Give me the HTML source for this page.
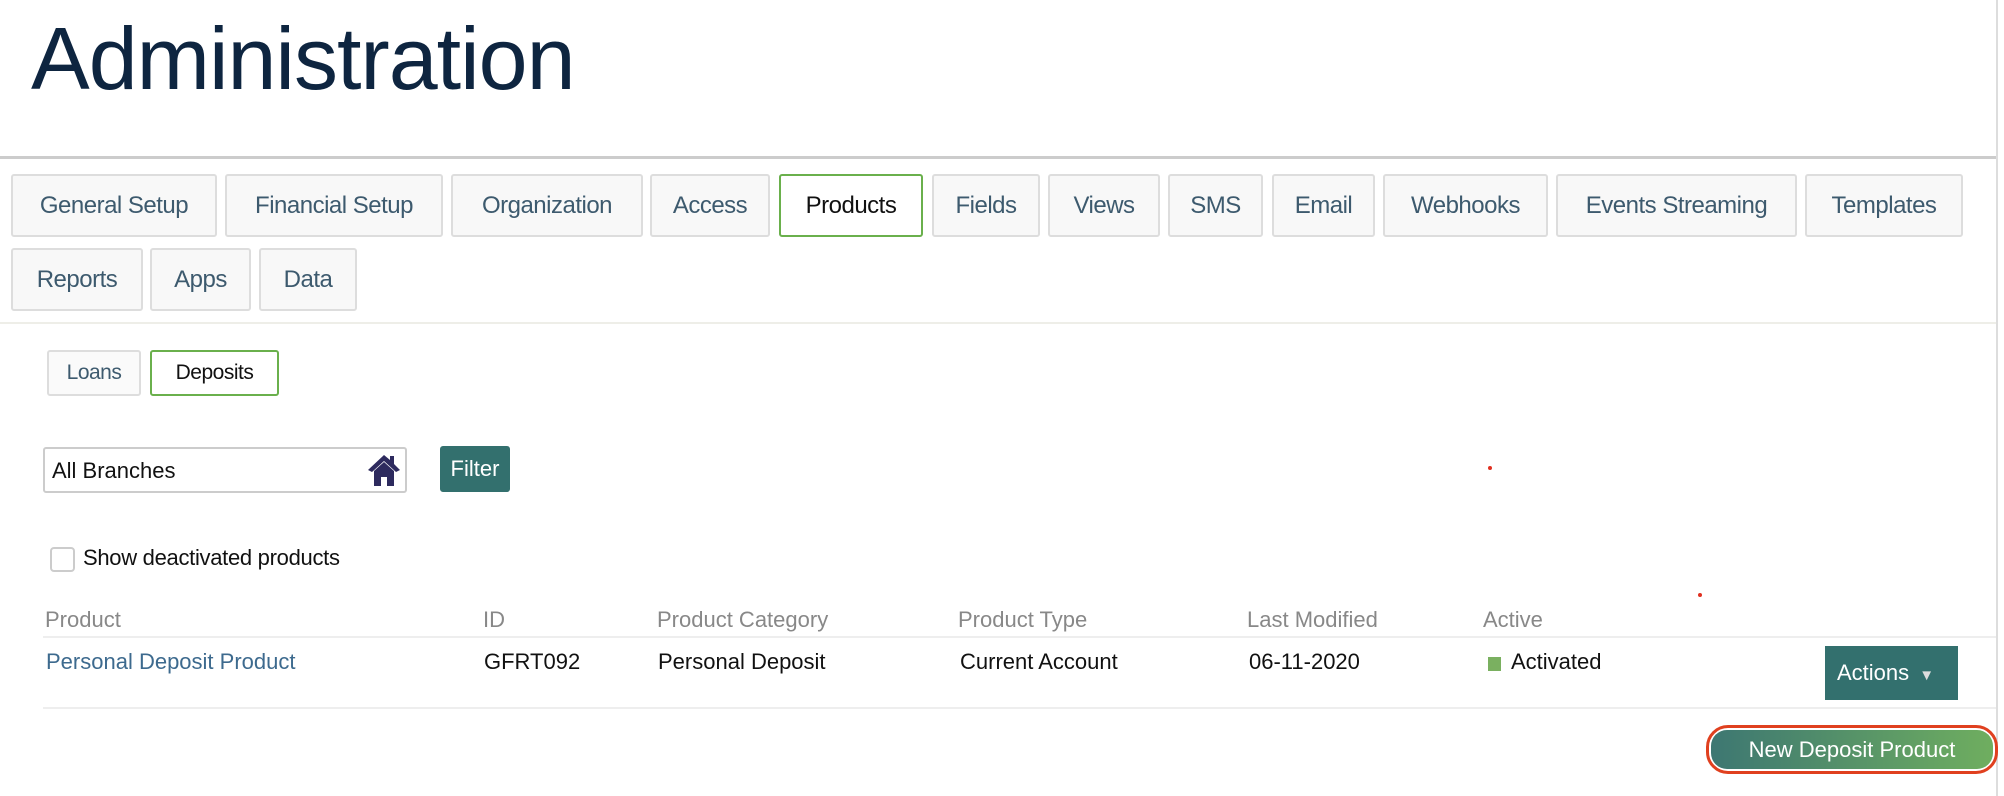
<!DOCTYPE html>
<html><head><meta charset="utf-8"><style>
*{margin:0;padding:0;box-sizing:border-box}
body{width:2004px;height:796px;background:#fff;position:relative;overflow:hidden;font-family:"Liberation Sans",sans-serif}
.a{position:absolute}
.tab{position:absolute;height:63px;background:#f8f8f8;border:2px solid #ddd;border-radius:3px;color:#3d5a6e;font-size:24px;display:flex;align-items:center;justify-content:center;white-space:nowrap;letter-spacing:-0.5px}
.tab.on{background:#fff;border-color:#6ab04c;color:#111}
.th{position:absolute;top:607px;color:#888;font-size:22px}
.td{position:absolute;top:649px;color:#111;font-size:22px}
</style></head><body>
<div class="a" style="left:0;top:0;width:1998px;height:796px;border-right:2px solid #ddd"></div>
<div class="a" style="left:31px;top:8px;font-size:88px;color:#0e2540;letter-spacing:-1px">Administration</div>
<div class="a" style="left:0;top:156px;width:1996px;height:3px;background:#ccc"></div>

<div class="tab" style="left:11px;top:174px;width:206px">General Setup</div>
<div class="tab" style="left:225px;top:174px;width:218px">Financial Setup</div>
<div class="tab" style="left:451px;top:174px;width:192px">Organization</div>
<div class="tab" style="left:650px;top:174px;width:120px">Access</div>
<div class="tab on" style="left:779px;top:174px;width:144px">Products</div>
<div class="tab" style="left:932px;top:174px;width:108px">Fields</div>
<div class="tab" style="left:1048px;top:174px;width:112px">Views</div>
<div class="tab" style="left:1168px;top:174px;width:95px">SMS</div>
<div class="tab" style="left:1272px;top:174px;width:103px">Email</div>
<div class="tab" style="left:1383px;top:174px;width:165px">Webhooks</div>
<div class="tab" style="left:1556px;top:174px;width:241px">Events Streaming</div>
<div class="tab" style="left:1805px;top:174px;width:158px">Templates</div>
<div class="tab" style="left:11px;top:248px;width:132px">Reports</div>
<div class="tab" style="left:150px;top:248px;width:101px">Apps</div>
<div class="tab" style="left:259px;top:248px;width:98px">Data</div>
<div class="a" style="left:0;top:322px;width:1996px;height:2px;background:#eeeee8"></div>

<div class="tab" style="left:47px;top:350px;width:94px;height:46px;font-size:21px;background:#fafafa;border-width:2px">Loans</div>
<div class="tab on" style="left:150px;top:350px;width:129px;height:46px;font-size:21px">Deposits</div>

<div class="a" style="left:43px;top:447px;width:364px;height:46px;border:2px solid #ccc;border-radius:3px;font-size:22px;color:#111;padding:9px 0 0 7px">All Branches</div>
<svg class="a" style="left:367px;top:453px" width="34" height="33" viewBox="0 0 34 33"><path d="M17 2 L1 17 L5 19 L17 8 L29 19 L33 17 L27 11 V3 H23 V7 Z M7 18 V33 H14 V24 H20 V33 H27 V18 L17 9 Z" fill="#2d2a5e"/></svg>
<div class="a" style="left:440px;top:446px;width:70px;height:46px;background:#33706e;border-radius:3px;color:#fff;font-size:22px;text-align:center;line-height:46px">Filter</div>
<div class="a" style="left:1488px;top:466px;width:4px;height:4px;border-radius:50%;background:#e03020"></div>
<div class="a" style="left:1698px;top:593px;width:4px;height:4px;border-radius:50%;background:#e03020"></div>

<div class="a" style="left:50px;top:547px;width:25px;height:25px;border:2px solid #ccc;border-radius:4px"></div>
<div class="a" style="left:83px;top:545px;font-size:22px;color:#111;letter-spacing:-0.3px">Show deactivated products</div>

<div class="th" style="left:45px">Product</div>
<div class="th" style="left:483px">ID</div>
<div class="th" style="left:657px">Product Category</div>
<div class="th" style="left:958px">Product Type</div>
<div class="th" style="left:1247px">Last Modified</div>
<div class="th" style="left:1483px">Active</div>
<div class="a" style="left:43px;top:636px;width:1953px;height:2px;background:#eee"></div>
<div class="td" style="left:46px;color:#3d6a8e">Personal Deposit Product</div>
<div class="td" style="left:484px">GFRT092</div>
<div class="td" style="left:658px">Personal Deposit</div>
<div class="td" style="left:960px">Current Account</div>
<div class="td" style="left:1249px">06-11-2020</div>
<div class="a" style="left:1488px;top:657px;width:13px;height:14px;background:#7ab060"></div>
<div class="td" style="left:1511px">Activated</div>
<div class="a" style="left:1825px;top:646px;width:133px;height:54px;background:#33706e;color:#fff;font-size:22px;line-height:54px;padding-left:12px">Actions <span style="font-size:15px;color:#ddd;margin-left:4px">&#9660;</span></div>
<div class="a" style="left:43px;top:707px;width:1953px;height:2px;background:#eee"></div>

<div class="a" style="left:1706px;top:725px;width:292px;height:49px;border:3px solid #e0401f;border-radius:22px;padding:2px">
<div style="width:100%;height:100%;border-radius:16px;background:linear-gradient(90deg,#3d7772,#6fae5f);color:#fff;font-size:22px;text-align:center;line-height:39px">New Deposit Product</div></div>
</body></html>
